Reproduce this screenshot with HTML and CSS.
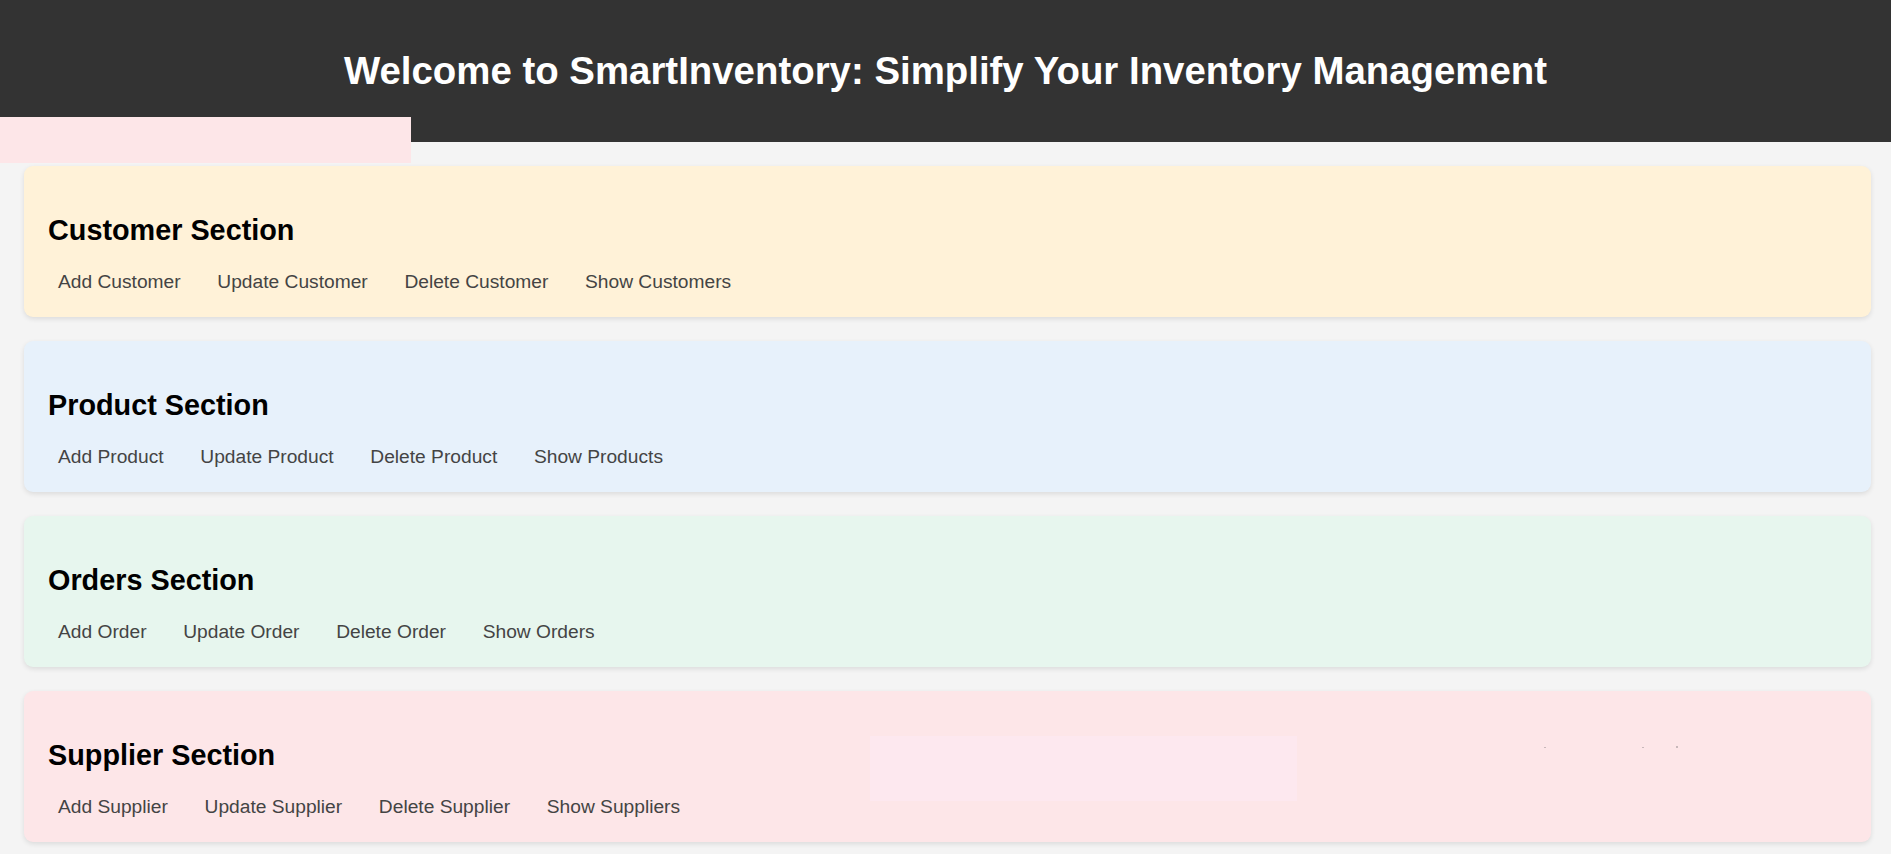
FILE: index.html
```html
<!DOCTYPE html>
<html lang="en">
<head>
<meta charset="utf-8">
<title>SmartInventory</title>
<link rel="stylesheet" href="styles.css">
</head>
<body>
<header class="site-header">
  <h1 class="site-title">Welcome to SmartInventory: Simplify Your Inventory Management</h1>
</header>
<nav class="side-nav"></nav>
<main class="content">
  <section class="card card-customer">
    <h2 class="card-title">Customer Section</h2>
    <div class="card-links">
      <a class="card-link" href="#">Add Customer</a>
      <a class="card-link" href="#">Update Customer</a>
      <a class="card-link" href="#">Delete Customer</a>
      <a class="card-link" href="#">Show Customers</a>
    </div>
  </section>
  <section class="card card-product">
    <h2 class="card-title">Product Section</h2>
    <div class="card-links">
      <a class="card-link" href="#">Add Product</a>
      <a class="card-link" href="#">Update Product</a>
      <a class="card-link" href="#">Delete Product</a>
      <a class="card-link" href="#">Show Products</a>
    </div>
  </section>
  <section class="card card-orders">
    <h2 class="card-title">Orders Section</h2>
    <div class="card-links">
      <a class="card-link" href="#">Add Order</a>
      <a class="card-link" href="#">Update Order</a>
      <a class="card-link" href="#">Delete Order</a>
      <a class="card-link" href="#">Show Orders</a>
    </div>
  </section>
  <section class="card card-supplier">
    <h2 class="card-title">Supplier Section</h2>
    <div class="card-links">
      <a class="card-link" href="#">Add Supplier</a>
      <a class="card-link" href="#">Update Supplier</a>
      <a class="card-link" href="#">Delete Supplier</a>
      <a class="card-link" href="#">Show Suppliers</a>
    </div>
    <div class="overlay-box"></div>
    <span class="speck speck-1"></span>
    <span class="speck speck-2"></span>
    <span class="speck speck-3"></span>
  </section>
</main>
</body>
</html>
```

FILE: styles.css
```css
* {
  box-sizing: border-box;
}

html, body {
  margin: 0;
  padding: 0;
}

body {
  background: #f4f4f4;
  font-family: "Liberation Sans", Arial, sans-serif;
  color: #000;
  overflow: hidden;
}

.site-header {
  background: #333333;
  padding: 49px 0 49px;
  text-align: center;
}

.site-title {
  margin: 0;
  color: #ffffff;
  font-size: 38.4px;
  font-weight: bold;
  line-height: 44px;
}

.side-nav {
  position: relative;
  width: 411px;
  height: 46px;
  margin-top: -25px;
  background: #fde6e8;
}

.content {
  padding: 3px 20px 0 24px;
}

.card {
  position: relative;
  border-radius: 9px;
  padding: 24px;
  margin-bottom: 24px;
  box-shadow: 0 2px 5px rgba(0, 0, 0, 0.1);
}

.card-customer { background: #fff2d8; }
.card-product { background: #e7f1fb; }
.card-orders { background: #e7f6ee; }
.card-supplier { background: #fde6e8; }

.card-title {
  margin: 0 0 24px;
  padding-top: 24px;
  font-size: 28.8px;
  font-weight: bold;
  line-height: 33px;
}

.card-links {
  display: flex;
  gap: 16.7px;
}

.card-link {
  padding: 0 10px;
  color: #444444;
  text-decoration: none;
  font-size: 19.2px;
  line-height: 22px;
}

.overlay-box {
  position: absolute;
  left: 846px;
  top: 45px;
  width: 427px;
  height: 65px;
  background: #fde8ef;
}

.speck {
  position: absolute;
  top: 56px;
  width: 2px;
  height: 1px;
  background: #c8b8ba;
}

.speck-1 { left: 1520px; }
.speck-2 { left: 1618px; }
.speck-3 { left: 1652px; top: 55px; height: 2px; }
```
